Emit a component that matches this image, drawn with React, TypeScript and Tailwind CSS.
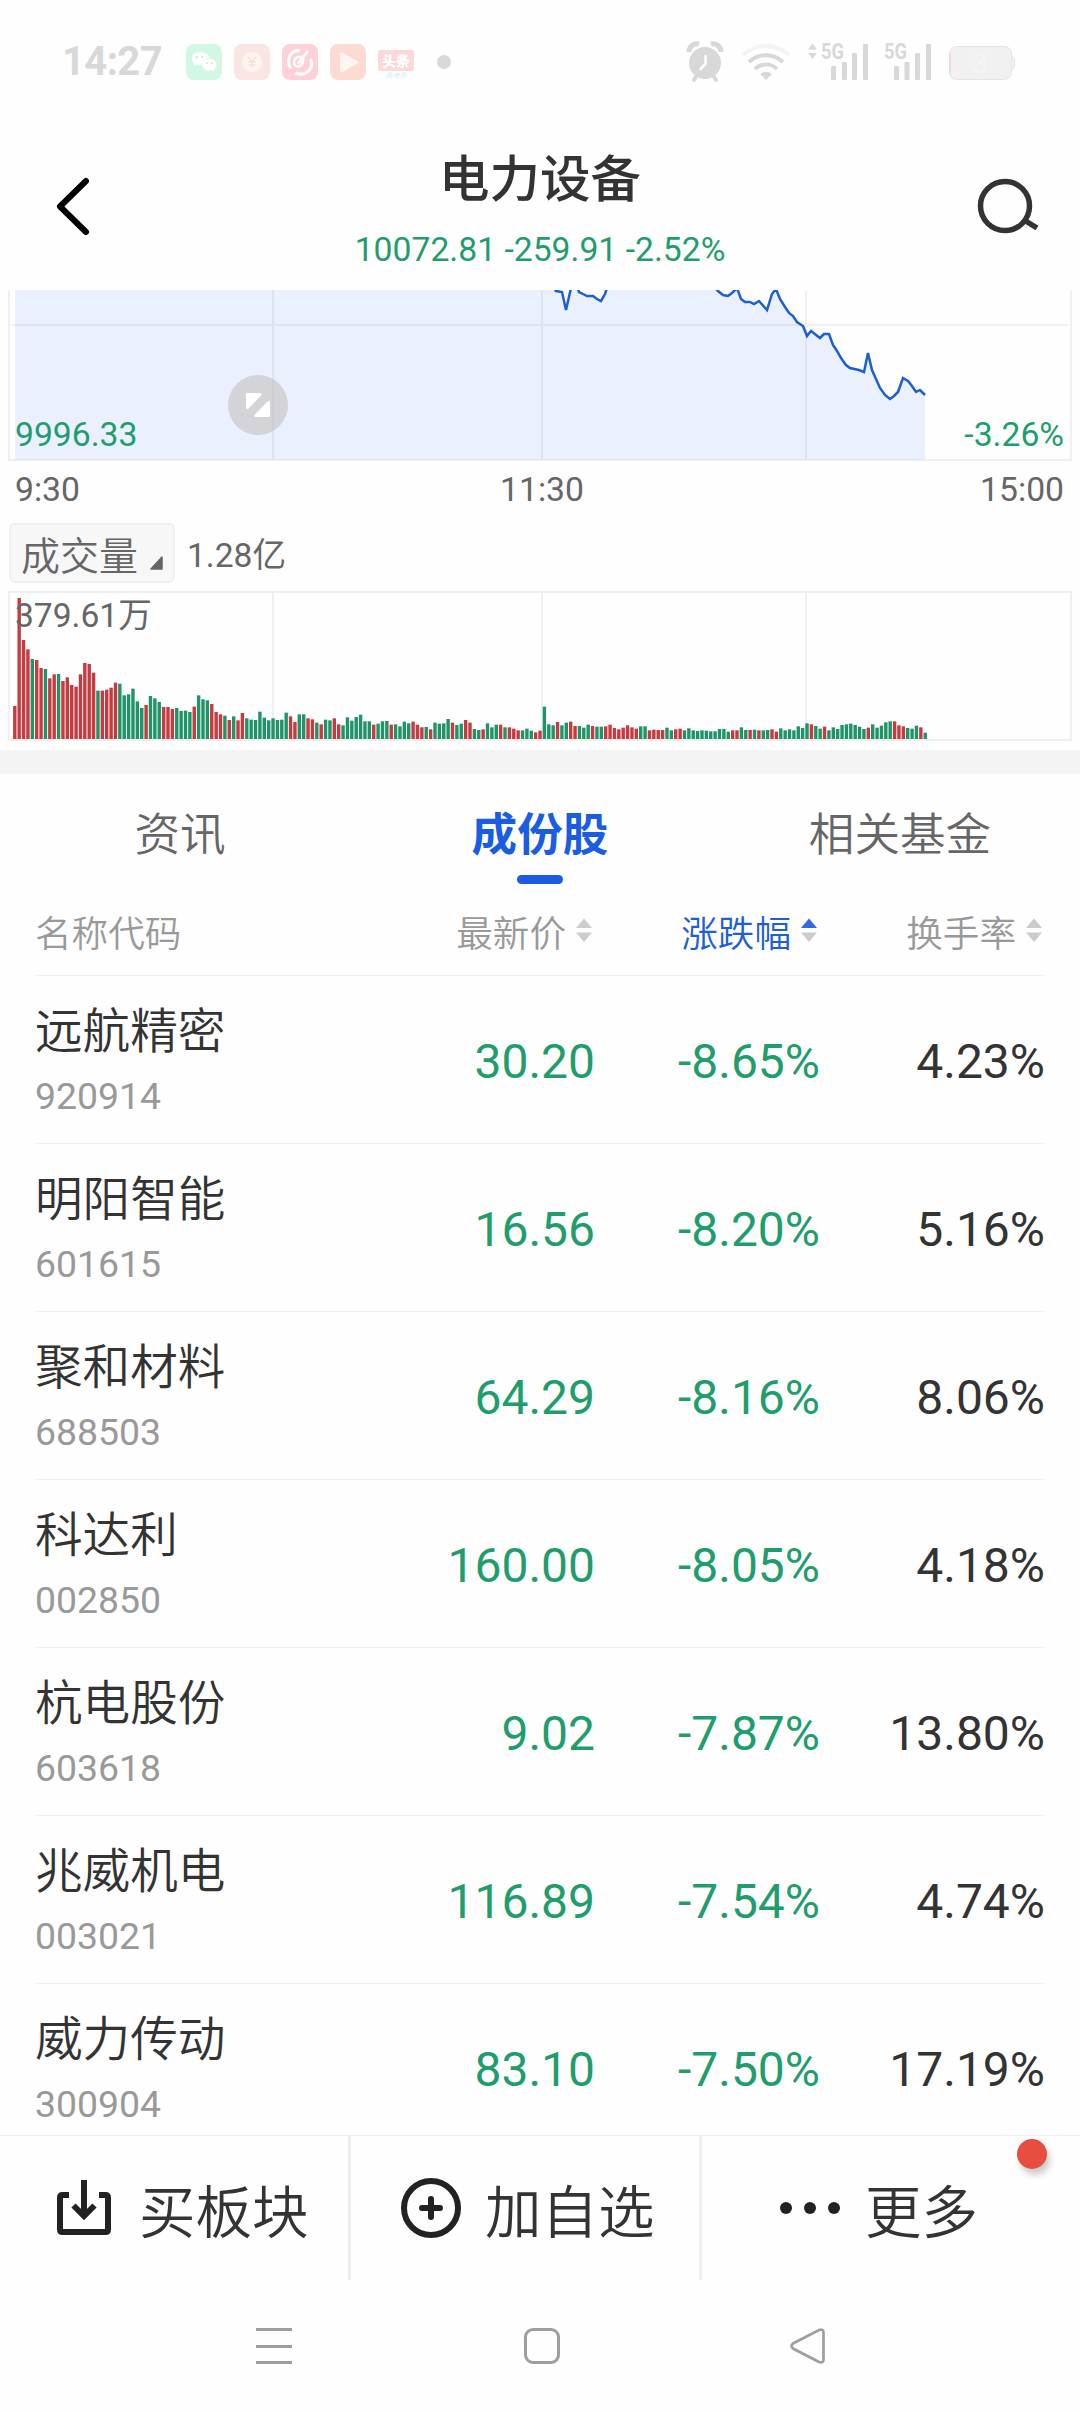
const stocks = [
    { name: "远航精密", code: "920914", price: "30.20", change: "-8.65%", turnover: "4.23%" },
    { name: "明阳智能", code: "601615", price: "16.56", change: "-8.20%", turnover: "5.16%" },
    { name: "聚和材料", code: "688503", price: "64.29", change: "-8.16%", turnover: "8.06%" },
    { name: "科达利", code: "002850", price: "160.00", change: "-8.05%", turnover: "4.18%" },
    { name: "杭电股份", code: "603618", price: "9.02", change: "-7.87%", turnover: "13.80%" },
    { name: "兆威机电", code: "003021", price: "116.89", change: "-7.54%", turnover: "4.74%" },
    { name: "威力传动", code: "300904", price: "83.10", change: "-7.50%", turnover: "17.19%" },
]

// one entry per minute, r = up, g = down
const volume =
    "r99 r423 r297 r269 g240 r237 r213 g210 r182 r194 g195 r174 r185 r162 r157 r194 r228 r225 r199 g145 r145 r148 r154 r169 g166 " +
    "g131 g134 g151 g113 g93 r102 g129 g122 g111 r96 r96 r90 g93 g84 g85 g81 r97 g131 g119 g116 r105 r81 r74 g70 r57 g68 r56 r78 " +
    "g62 g58 g57 g82 g64 g56 g62 g57 g58 g79 r68 r51 g74 g74 r62 r59 g49 r44 g58 g56 r62 r44 g41 g65 g55 g66 g73 g53 g53 r43 g46 " +
    "g53 g54 r43 g44 g38 g52 g47 r52 r43 r35 g36 r29 g49 g46 g47 g60 r49 g42 g46 r57 r49 g30 g27 r29 g47 g35 g43 r43 g35 r35 r31 " +
    "r26 g26 g31 g25 r20 r25 g97 g44 g41 r51 g41 g49 r52 r39 g39 g34 g43 r39 g37 g37 r38 r43 r33 r29 r34 r41 r35 r31 g38 g38 r26 " +
    "r28 r27 r27 g34 g26 r29 r31 g26 g32 g26 g24 g26 g25 g23 g23 g30 g30 g22 r26 r26 g35 g27 r27 g28 r26 g26 g27 r29 r22 g32 g26 " +
    "g29 g26 g38 g33 g47 r44 g39 g31 r37 g26 g35 g30 g42 g44 g46 g42 g37 g30 r34 g44 g34 g40 g50 g53 r53 r41 r38 g33 g31 g40 r35 g19"

const bars = volume.split(" ").map((v) => ({ up: v[0] === "r", h: Number(v.slice(1)) / 3 }))

const linePoints =
    "552,-5 556,1 562,2 566,20 571,-2 577,-4 579,2 583,4 587,6 593,6 597,9 601,11 605,4 608,-5 640,-40 690,-30 712,-6 718,1 723,5 728,6 732,3 737,-2 741,9 745,12 750,12 754,14 759,11 767,20 772,4 776,-1 780,9 785,17 789,23 793,26 797,32 803,36 807,46 811,41 820,48 824,44 829,44 833,55 837,61 841,68 846,75 850,78 859,80 864,82 868,63 872,80 880,98 885,105 890,109 894,106 898,102 903,88 908,91 912,96 916,102 920,100 925,105"

function StatusBar() {
    return (
        <div className="h-[124px] flex items-center pl-[62px] pr-[65px] text-[#d8d8d8]">
            <span className="w-[124px] font-['Roboto'] font-bold text-[40px] leading-none tracking-[-0.6px]">14:27</span>
            <div className="flex items-center gap-3">
                <svg width="36" height="36" viewBox="0 0 36 36">
                    <rect width="36" height="36" rx="8" fill="#d2f8e3" />
                    <path d="M13.500 8c-4.500 0-7.700 2.900-7.700 6.500 0 2 1.100 3.700 2.700 4.900l-.7 2.400 2.800-1.400c1.800.5 3.700.6 5.700 0 0-4 3-6.600 7.500-6.600C23 10.400 18.600 8 13.500 8z" fill="#fff" />
                    <path d="M23.300 14.800c-4 0-7.200 2.600-7.200 5.900s3.200 5.900 7.200 5.900c.9 0 1.700-.1 2.500-.4l2.500 1.400-.6-2.200c1.700-1.100 2.800-2.700 2.800-4.700 0-3.300-3.200-5.900-7.200-5.900z" fill="#fff" />
                    <circle cx="10.700" cy="13" r="1" fill="#bdebd0" />
                    <circle cx="16.200" cy="13" r="1" fill="#bdebd0" />
                    <circle cx="21" cy="19" r=".9" fill="#bdebd0" />
                    <circle cx="26" cy="19" r=".9" fill="#bdebd0" />
                </svg>
                <svg width="36" height="36" viewBox="0 0 36 36">
                    <rect width="36" height="36" rx="8" fill="#fbe5e2" />
                    <circle cx="18" cy="18" r="10" fill="#fef5ec" />
                    <path d="M14 12.500l4 5.500 4-5.500M18 18v6M14.500 18h7M14.500 21h7" stroke="#f9dfd6" strokeWidth="1.400" fill="none" />
                </svg>
                <svg width="36" height="36" viewBox="0 0 36 36">
                    <rect width="36" height="36" rx="8" fill="#fdd1d5" />
                    <path d="M18 6.500C11 6 6 11 6.500 18c.2 3 1 5 2.500 6.500M28.500 15C30.500 20 30 24 26.500 27c-3 3-8 4-13 2" stroke="#fff" strokeWidth="3" fill="none" />
                    <path d="M20 13c-4-1-8 1.500-8 5.500 0 3 2.500 4.500 5 4 4-.8 4-5 4.500-8" stroke="#fff" strokeWidth="2.500" fill="none" />
                    <path d="M26 7L16 19.500" stroke="#fff" strokeWidth="2.500" />
                </svg>
                <svg width="36" height="36" viewBox="0 0 36 36">
                    <rect width="36" height="36" rx="8" fill="#fddbd2" />
                    <path d="M12 8.500l16 9c1 .6 1 1.200 0 1.800l-16 9c-1.200.5-2 .2-2-1v-18c0-1 .8-1.500 2-.8z" fill="#fff5f1" />
                </svg>
                <div className="w-9 h-9 pt-1.5">
                    <div className="h-[21px] bg-[#fcd8d8] rounded-[2px] text-white text-center font-['Noto_Sans_CJK_SC'] font-black text-[14px] leading-[20px]">头条</div>
                    <div className="text-[#d5edf9] text-center font-['Noto_Sans_CJK_SC'] italic text-[7px] leading-[8px]">高考季</div>
                </div>
            </div>
            <div className="w-3.5 h-3.5 rounded-full bg-[#d8d8d8] ml-[23px]"></div>
            <svg className="ml-auto" width="330" height="60" viewBox="685 32 330 60" fill="#d8d8d8">
                <circle cx="705" cy="63" r="16" />
                <path d="M689 52a8 8 0 0 1 10-8M711 44a8 8 0 0 1 10 8" stroke="#d8d8d8" strokeWidth="5" fill="none" />
                <path d="M697 75l-3 5M713 75l3 5" stroke="#d8d8d8" strokeWidth="4" strokeLinecap="round" />
                <path d="M705.500 56v8l-5 5" stroke="#fff" strokeWidth="2.500" strokeLinecap="round" fill="none" />
                <path d="M743 55c13-12 33-12 46 0" stroke="#f4f4f4" strokeWidth="4" fill="none" />
                <path d="M749 62c10-9 24-9 34 0M755 69c7-6 15-6 22 0" stroke="#d8d8d8" strokeWidth="4" fill="none" />
                <path d="M760 74c4-3 8-3 12 0l-6 6z" />
                <path d="M808 49.500l4.500-6 4.500 6zM808 53l4.500 6 4.500-6z" />
                <text x="821" y="59" fontSize="22" fontWeight="700" fontFamily="Roboto" textLength="23" lengthAdjust="spacingAndGlyphs">5G</text>
                <text x="884" y="59" fontSize="22" fontWeight="700" fontFamily="Roboto" textLength="23" lengthAdjust="spacingAndGlyphs">5G</text>
                <rect x="831" y="66" width="5" height="14" rx="1" />
                <rect x="842" y="62" width="5" height="18" rx="1" />
                <rect x="852" y="53" width="5" height="27" rx="1" />
                <rect x="863" y="44" width="5" height="36" rx="1" />
                <rect x="894" y="66" width="5" height="14" rx="1" />
                <rect x="904.500" y="62" width="5" height="18" rx="1" />
                <rect x="915" y="53" width="5" height="27" rx="1" />
                <rect x="926" y="44" width="5" height="36" rx="1" />
                <rect x="949.500" y="46.500" width="62" height="33" rx="7" fill="#f1f1f1" stroke="#e4e4e4" />
                <path d="M950 53v20" stroke="#f3cfc9" strokeWidth="1.500" />
                <path d="M1012 57c2 0 2.500 1 2.500 2.500v7c0 1.500-.5 2.500-2.500 2.500" fill="#f1f1f1" stroke="#e4e4e4" />
                <text x="980" y="74" fontSize="29" fontWeight="700" fontFamily="Roboto" textAnchor="middle" fill="#f4f4f4">3</text>
            </svg>
        </div>
    )
}

function Header() {
    return (
        <header className="h-[166px] flex justify-between pl-[47px] pr-[47px]">
            <svg className="mt-[52px]" width="60" height="62" viewBox="-7 0 60 62">
                <path d="M32 5L6 30.500 32 56" fill="none" stroke="#000" strokeWidth="6" strokeLinecap="round" strokeLinejoin="round" />
            </svg>
            <div className="pt-[21px] flex flex-col items-center gap-[23px]">
                <h1 className="text-[50.5px] leading-[60px] font-medium text-[#333]">电力设备</h1>
                <div className="font-['Roboto'] text-[33.7px] leading-[44px] text-[#1f9d6c]">10072.81 -259.91 -2.52%</div>
            </div>
            <svg className="mt-[52px] overflow-visible" width="60" height="62" viewBox="973 176 60 62">
                <circle cx="1005" cy="206" r="24.500" fill="none" stroke="#333" strokeWidth="5.500" />
                <path d="M1024 220l13 8" stroke="#333" strokeWidth="5.500" />
            </svg>
        </header>
    )
}

function PriceChart() {
    return (
        <div className="relative h-[172px] font-['Roboto'] text-[33.7px] leading-[40px] text-[#1f9d6c]">
            <svg className="block" width="1080" height="172" viewBox="0 0 1080 172">
                <path d="M9 0V170H1071V0M12 35H1068M273 0V170M542 0V170M806 0V170" fill="none" stroke="#f0f0f0" strokeWidth="2" />
                <polygon points={"15,170 15,-40 540,-40 " + linePoints + " 925,170"} fill="#1f5fff" fillOpacity=".09" />
                <polyline points={linePoints} fill="none" stroke="#1d5fd0" strokeWidth="2.500" />
                <circle cx="258" cy="115" r="30" fill="#c4c2be" fillOpacity=".6" />
                <path d="M247 103h13.500q2 .5.500 2.500l-12.500 13q-2 1-2.500-.5V104q0-1 1-1zM269 127h-13.500q-2-.5-.5-2.500l12.500-13q2-1 2.500.5V126q0 1-1 1z" fill="#fff" />
            </svg>
            <span className="absolute left-[15px] top-[125px]">9996.33</span>
            <span className="absolute right-[16px] top-[125px]">-3.26%</span>
        </div>
    )
}

function VolumeChart() {
    return (
        <div className="relative mt-2 h-[151px]">
            <svg className="block" width="1080" height="151" viewBox="0 0 1080 151">
                <path d="M9 1H1071V149H9ZM273 1V149M542 1V149M806 1V149" fill="none" stroke="#f0f0f0" strokeWidth="2" />
                {bars.map((b, i) => (
                    <rect key={i} x={13.1 + i * 4.377} y={148 - b.h} width="3.400" height={b.h} fill={b.up ? "#c63a40" : "#1f9468"} />
                ))}
            </svg>
            <span className="absolute left-[15px] top-[5px] font-['Roboto','Noto_Sans_CJK_SC',sans-serif] text-[33.6px] leading-[40px] text-[#666]">379.61万</span>
        </div>
    )
}

function SortIcon({ active }: { active?: boolean }) {
    return (
        <svg width="16" height="24" viewBox="0 0 16 24" className="mb-1">
            <path d="M0 10L8 0.500 16 10z" fill={active ? "#2f6ae0" : "#ccc"} />
            <path d="M0 14.500L8 24 16 14.500z" fill="#ccc" />
        </svg>
    )
}

function Row({ s }: { s: (typeof stocks)[0] }) {
    return (
        <div className="h-[168px] shrink-0 flex border-b border-[#f0f0f0] font-['Roboto'] text-[48px] text-[#1f9d6c]">
            <div className="w-[320px] pt-[22px]">
                <div className="font-['Noto_Sans_CJK_SC',sans-serif] font-[350] text-[47.6px] leading-[60px] text-[#333]">{s.name}</div>
                <div className="text-[37.4px] leading-[44px] mt-4 text-[#999]">{s.code}</div>
            </div>
            <div className="w-[240px] text-right leading-[172px]">{s.price}</div>
            <div className="w-[225px] text-right leading-[172px]">{s.change}</div>
            <div className="w-[225px] text-right leading-[172px] text-[#333]">{s.turnover}</div>
        </div>
    )
}

export default function App() {
    return (
        <main className="w-[1080px] h-[2412px] overflow-hidden bg-[#fefefe] flex flex-col font-['Noto_Sans_CJK_SC',sans-serif]">
            <StatusBar />
            <Header />
            <PriceChart />

            <div className="h-[61px] pt-2 pl-[15px] pr-[16px] flex justify-between font-['Roboto'] text-[33.7px] leading-[40px] text-[#666]">
                <span>9:30</span>
                <span className="pl-[24px]">11:30</span>
                <span>15:00</span>
            </div>
            <div className="h-[60px] flex items-center pl-[9px] text-[#666]">
                <div className="w-[166px] h-[60px] pl-[10px] pr-[10px] flex items-center justify-between bg-[#f7f7f7] border-2 border-[#f0f0f0] rounded-md">
                    <span className="text-[39px] leading-[54px] font-[350]">成交量</span>
                    <svg className="mt-5" width="13" height="14" viewBox="0 0 13 14">
                        <path d="M12 1v12H1z" fill="#666" stroke="#666" strokeWidth="1.500" strokeLinejoin="round" />
                    </svg>
                </div>
                <span className="ml-[12px] mt-1.5 font-['Roboto','Noto_Sans_CJK_SC',sans-serif] text-[33.6px] leading-[40px]">1.28亿</span>
            </div>
            <VolumeChart />
            <div className="mt-2 h-6 shrink-0 bg-[#f4f4f4]"></div>

            <nav className="h-[110px] pt-[25px] shrink-0 grid grid-cols-3 text-center text-[45.6px] leading-[64px] text-[#666]">
                <span className="font-[350]">资讯</span>
                <div className="flex flex-col items-center">
                    <span className="font-bold text-[#1a5de3]">成份股</span>
                    <div className="w-[46px] h-[9px] mt-[12px] rounded-full bg-[#1a5de3]"></div>
                </div>
                <span className="font-[350]">相关基金</span>
            </nav>

            <div className="flex flex-col h-[1251px] shrink-0 overflow-hidden pl-[35px] pr-[35px]">
                <div className="h-[92px] pt-[23px] shrink-0 flex items-start border-b border-[#f0f0f0] text-[36.6px] leading-[50px] font-[350] text-[#999]">
                    <span className="w-[320px]">名称代码</span>
                    <div className="w-[237px] flex items-center justify-end gap-[10px]">最新价 <SortIcon /></div>
                    <div className="w-[225px] flex items-center justify-end gap-[10px] text-[#1f5fd6]">涨跌幅 <SortIcon active /></div>
                    <div className="w-[225px] flex items-center justify-end gap-[10px]">换手率 <SortIcon /></div>
                </div>
                {stocks.map((s) => (
                    <Row key={s.code} s={s} />
                ))}
            </div>

            <footer className="relative h-[145px] shrink-0 flex border-t border-[#eee] text-[56.5px] leading-[80px] font-[350] text-[#333]">
                <div className="w-[351px] border-r-[3px] border-[#eee] pl-[56px] flex items-center">
                    <svg width="56" height="56" viewBox="0 0 56 56" fill="none" stroke="#222" strokeWidth="6">
                        <path d="M13 15H6.500Q4 15 4 17.500V49.500Q4 52 6.500 52H49.500Q52 52 52 49.500V17.500Q52 15 49.500 15H43" />
                        <path d="M28 0V35M17.500 25.500L28 36 38.500 25.500" />
                    </svg>
                    <span className="ml-[27px]">买板块</span>
                </div>
                <div className="w-[351px] border-r-[3px] border-[#eee] pl-[50px] flex items-center">
                    <svg width="60" height="60" viewBox="0 0 60 60" fill="none" stroke="#222" strokeWidth="6">
                        <circle cx="30" cy="30" r="27" />
                        <path d="M30 21V39M21 30H39" strokeLinecap="round" />
                    </svg>
                    <span className="ml-[24px]">加自选</span>
                </div>
                <div className="pl-[78px] flex items-center">
                    <div className="flex gap-3">
                        <i className="w-3 h-3 rounded-full bg-[#222]"></i>
                        <i className="w-3 h-3 rounded-full bg-[#222]"></i>
                        <i className="w-3 h-3 rounded-full bg-[#222]"></i>
                    </div>
                    <span className="ml-[25px]">更多</span>
                </div>
                <div className="absolute left-[1017px] top-[3px] w-[30px] h-[30px] rounded-full bg-[#e84d3f] shadow-[3px_6px_6px_rgba(0,0,0,0.2)]"></div>
            </footer>

            {/* system navigation */}
            <div className="h-[132px] shrink-0 flex items-center pl-[256px]">
                <div className="w-9 h-9 flex flex-col justify-between">
                    <div className="h-[3px] bg-[#9e9e9e]"></div>
                    <div className="h-[3px] bg-[#9e9e9e]"></div>
                    <div className="h-[3px] bg-[#9e9e9e]"></div>
                </div>
                <div className="ml-[232px] w-9 h-9 border-[3px] border-[#9e9e9e] rounded-[9px]"></div>
                <svg className="ml-[230px]" width="36" height="36" viewBox="0 0 36 36">
                    <path d="M3 15.500L29 2q4.500-1.500 4.500 2.500V31.500q0 4-4.500 2.500L3 20.500q-3-2.500 0-5z" fill="none" stroke="#9e9e9e" strokeWidth="2.700" />
                </svg>
            </div>
        </main>
    )
}
